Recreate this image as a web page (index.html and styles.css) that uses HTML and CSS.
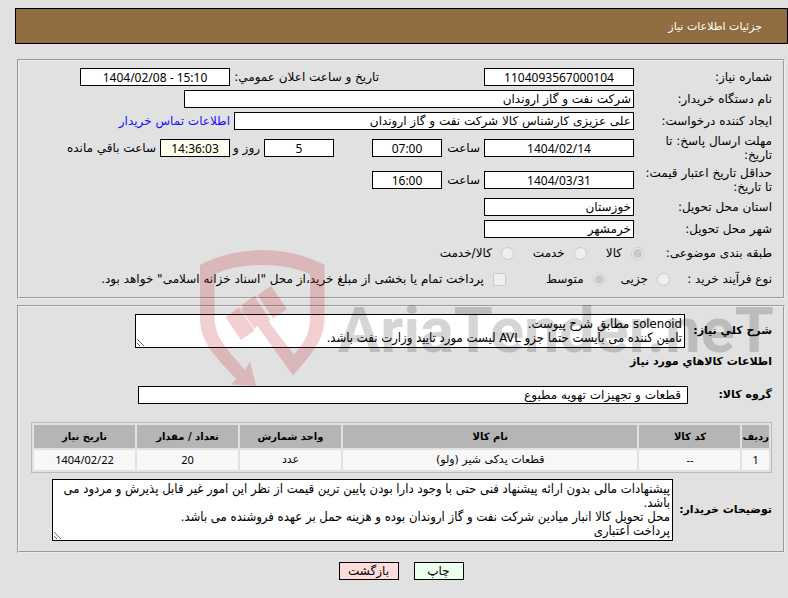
FILE: index.html
```html
<!DOCTYPE html>
<html lang="fa" dir="rtl">
<head>
<meta charset="utf-8">
<title>جزئیات اطلاعات نیاز</title>
<link rel="stylesheet" href="styles.css">
</head>
<body>
<header class="page-title"><h1>جزئیات اطلاعات نیاز</h1></header>
<main>
<section class="panel">
  <div class="row">
    <label class="name" for="need-no">شماره نیاز:</label>
    <input class="field num w150" id="need-no" value="1104093567000104" readonly>
    <label class="announce" for="announce">تاریخ و ساعت اعلان عمومي:</label>
    <input class="field num w150" id="announce" value="1404/02/08 - 15:10" dir="ltr" readonly>
  </div>
  <div class="row">
    <label class="name" for="org">نام دستگاه خریدار:</label>
    <input class="field w450" id="org" value="شرکت نفت و گاز اروندان" readonly>
  </div>
  <div class="row">
    <label class="name" for="creator">ایجاد کننده درخواست:</label>
    <input class="field w400" id="creator" value="علی عزیزی کارشناس کالا شرکت نفت و گاز اروندان" readonly>
    <a href="#contact">اطلاعات تماس خریدار</a>
  </div>
  <div class="row">
    <label class="name" for="deadline"><span>مهلت ارسال پاسخ: تا تاریخ:</span></label>
    <input class="field num w150" id="deadline" value="1404/02/14" readonly>
    <label class="hour" for="deadline-hour">ساعت</label>
    <input class="field num w70" id="deadline-hour" value="07:00" readonly>
    <input class="field num w70 days" id="days" value="5" readonly>
    <label class="unit" for="days">روز و</label>
    <input class="field num w70 remaining" id="remaining" value="14:36:03" readonly>
    <label for="remaining">ساعت باقي مانده</label>
  </div>
  <div class="row">
    <label class="name" for="validity"><span>حداقل تاریخ اعتبار قیمت: تا تاریخ:</span></label>
    <input class="field num w150" id="validity" value="1404/03/31" readonly>
    <label class="hour" for="validity-hour">ساعت</label>
    <input class="field num w70" id="validity-hour" value="16:00" readonly>
  </div>
  <div class="row">
    <label class="name" for="province">استان محل تحویل:</label>
    <input class="field w150" id="province" value="خوزستان" readonly>
  </div>
  <div class="row">
    <label class="name" for="city">شهر محل تحویل:</label>
    <input class="field w150" id="city" value="خرمشهر" readonly>
  </div>
  <div class="row choices subject" role="radiogroup" aria-labelledby="subject-name">
    <span class="name" id="subject-name">طبقه بندی موضوعی:</span>
    <label><input type="radio" name="subject" checked disabled>کالا</label>
    <label><input type="radio" name="subject" disabled>خدمت</label>
    <label><input type="radio" name="subject" disabled>کالا/خدمت</label>
  </div>
  <div class="row choices process" role="group" aria-labelledby="process-name">
    <span class="name" id="process-name">نوع فرآیند خرید :</span>
    <label><input type="radio" name="process" disabled>جزیی</label>
    <label><input type="radio" name="process" checked disabled>متوسط</label>
    <label><input type="checkbox" disabled>پرداخت تمام یا بخشی از مبلغ خرید،از محل "اسناد خزانه اسلامی" خواهد بود.</label>
  </div>
</section>

<section class="panel details">
  <div class="row">
    <label class="strong" for="summary">شرح كلي نیاز:</label>
    <textarea class="field w550" id="summary" rows="2" readonly>solenoid مطابق شرح پیوست.
تامین کننده می بایست حتما جزو AVL لیست مورد تایید وزارت نفت باشد.</textarea>
  </div>
  <h2>اطلاعات كالاهاي مورد نیاز</h2>
  <div class="row">
    <label class="strong" for="group">گروه کالا:</label>
    <input class="field w550" id="group" value="قطعات و تجهیزات تهویه مطبوع" readonly>
  </div>
  <table>
    <colgroup><col class="c-row"><col class="c-side"><col><col class="c-side"><col class="c-side"><col class="c-side"></colgroup>
    <thead><tr><th>ردیف</th><th>کد کالا</th><th>نام کالا</th><th>واحد شمارش</th><th>تعداد / مقدار</th><th>تاریخ نیاز</th></tr></thead>
    <tbody><tr><td class="num">1</td><td class="num">--</td><td>قطعات یدکی شیر (ولو)</td><td>عدد</td><td class="num">20</td><td class="num">1404/02/22</td></tr></tbody>
  </table>
  <div class="row">
    <label class="strong" for="notes">توضیحات خریدار:</label>
    <textarea class="field w621" id="notes" rows="4" readonly>پیشنهادات مالی بدون ارائه پیشنهاد فنی حتی با وجود دارا بودن پایین ترین قیمت از نظر این امور غیر قابل پذیرش و مردود می باشد.
محل تحویل کالا انبار میادین شرکت نفت و گاز اروندان بوده و هزینه حمل بر عهده فروشنده می باشد.
پرداخت اعتباری</textarea>
  </div>
</section>
<div class="actions">
  <button type="button" class="print">چاپ</button>
  <button type="button" class="back">بازگشت</button>
</div>
</main>

<div class="watermark" aria-hidden="true">
<svg width="600" height="150" viewBox="190 240 600 150">
  <g fill="#c00c18" opacity=".19">
    <path d="M200 265Q229 250 262 250Q296 250 324.500 265V318C324.500 340 311 355 293 375.500L257.500 326L254 328.500L241 309L256 299L270 319L269 322L294 354.500C304 343 310 334 310 318V274Q290 265 262 265Q235 265 214.500 274V316C214.500 340 230 352 245 370L250 361.500L256 386L231 384.500L236 379C214 355 200 342 200 318Z"/>
    <path d="M225.500 317L239 307.500L254.500 330.500L241 340ZM241.500 305L255 295.500L257 298L243.500 307.500ZM257.500 295L271 286L287 309L273 318.500Z"/>
  </g>
  <text class="wordmark" x="338" y="352">AriaTender.neT</text>
</svg>
</div>
</body>
</html>
```
FILE: styles.css
```css
* { box-sizing: border-box; }
body {
  position: relative;
  margin: 0;
  padding-top: 8px;
  background: #e1e1e1;
  color: #000;
  font: 12px/14px "DejaVu Sans", sans-serif;
  overflow-x: hidden;
}
input, textarea, button { font: inherit; color: inherit; }
h1, h2 { margin: 0; font-size: inherit; }
.page-title {
  display: flex;
  align-items: center;
  height: 36px;
  margin-left: 15px;
  padding: 2px 25px 0;
  border: 1px solid #000;
  background: #906d40;
  color: #fff;
}
.page-title h1 { font-size: 11px; font-weight: normal; }
main { padding: 15px 3px 0 17px; }
.panel {
  display: flex;
  flex-direction: column;
  gap: 4px;
  padding: 7px 11px;
  border: 2px groove #ededed;
}
.panel.details { margin-top: 6px; padding-bottom: 10px; }
.row { display: flex; align-items: center; }
.name { flex: none; width: 138px; }
.name span { display: block; width: 130px; }
.field {
  height: 18px;
  margin: 0;
  padding: 0 2px;
  border: 1px solid #000;
  border-radius: 0;
  background: #fff;
}
.num { font-family: "Noto Sans", "DejaVu Sans", sans-serif; }
input.num { text-align: center; }
.w70 { width: 70px; }
.w150 { width: 150px; }
.w400 { width: 400px; }
.w450 { width: 450px; }
.w550 { width: 550px; }
.w621 { width: 621px; }
.announce { width: 149px; margin-right: 105px; white-space: nowrap; }
.hour { width: 42px; padding-right: 4px; }
.days { margin-right: 38px; }
.unit { width: 34px; padding-right: 4px; }
.remaining { background: #ffffed; margin-left: 4px; }
a { margin-right: 4px; color: #1a0dff; text-decoration: none; }
.choices { height: 22px; }
.choices label { display: flex; align-items: center; gap: 9px; }
.subject .name { width: 128px; }
.process .name { width: 102px; }
.subject label { margin-left: 19px; }
.process label { margin-left: 15px; }
.process label:nth-of-type(2) { margin-left: 40px; }
input[type="radio"], input[type="checkbox"] {
  appearance: none;
  flex: none;
  width: 13px;
  height: 13px;
  margin: 0;
  border: 1px solid #cbcbcb;
  border-radius: 2px;
  background: #efefef;
}
input[type="radio"] { border-radius: 50%; }
input[type="radio"]:checked { background: radial-gradient(#c8c8c8 0 4px, #efefef 5px); }
textarea.field {
  height: auto;
  padding: 2px;
  font: 13px/14px "DejaVu Sans Condensed", "DejaVu Sans", sans-serif;
  resize: both;
  overflow: auto;
}
.strong, h2 { font-size: 11px; font-weight: bold; }
.details .row { justify-content: flex-end; }
.details .strong { flex: 1; white-space: nowrap; }
#summary { margin-left: 105px; }
#group { margin-left: 108px; padding-right: 6px; }
#notes { margin-left: 22px; }
h2 { padding: 3px 0 13px; }
table {
  margin: 14px 0 2px 1px;
  border: 1px solid #bbb;
  border-spacing: 2px;
  table-layout: fixed;
}
th, td { padding: 0; text-align: center; }
th { height: 23px; background: #b5b5b5; font-size: 10px; }
td { height: 20px; background: #f7f7f7; font-size: 11px; }
.c-row { width: 26px; }
.c-side { width: 101px; }
.actions { display: flex; justify-content: center; gap: 15px; padding-top: 9px; }
button { height: 18px; padding: 0; border: 1px solid #000; }
.print { width: 50px; background: #edffed; }
.back { width: 60px; background: #ffdcdc; }
.watermark {
  position: absolute;
  top: 240px;
  left: 190px;
  pointer-events: none;
}
.watermark svg { display: block; }
.wordmark {
  direction: ltr;
  fill: #000;
  opacity: .16;
  font: bold 63px Roboto, sans-serif;
}
```
